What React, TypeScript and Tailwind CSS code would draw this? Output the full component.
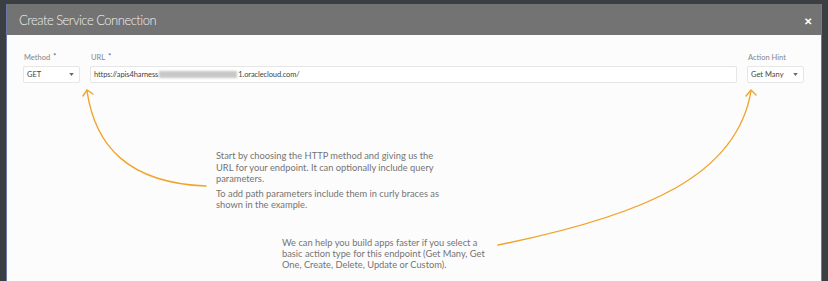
import React from "react";

const Caret = () => (
  <svg width="5" height="3" viewBox="0 0 6 4" className="shrink-0">
    <path d="M0 0 L6 0 L3 4 Z" fill="#666" />
  </svg>
);

const Field: React.FC<{ label: string; required?: boolean; className?: string; children: React.ReactNode }> = ({
  label,
  required,
  className,
  children,
}) => (
  <div className={"flex flex-col " + (className ?? "")}>
    <div className="h-[14px] flex items-start text-[7.5px] leading-[12px] text-[#858585] pl-[1px]">
      {label}
      {required && <span className="ml-[3px] text-[#4a6a9a] text-[8px] leading-[9px]">*</span>}
    </div>
    <div className="h-[17px] bg-white border border-[#e6e6e6] rounded-[2px] flex items-center pl-[3px] pr-[5px] text-[7.5px] text-[#444]">
      {children}
    </div>
  </div>
);

const App: React.FC = () => {
  return (
    <div
      className="w-[828px] h-[281px] overflow-hidden bg-[#3b3f43] pt-[4px] pl-[6px] pr-[6px]"
      style={{ fontFamily: "Lato, 'Liberation Sans', sans-serif" }}
    >
      <div className="w-full h-full flex flex-col border-l border-r border-[#6b78a8]">
        <div className="h-[31px] bg-[#737373] flex items-center justify-between pl-[12px] pr-[9px] shrink-0">
          <h1 className="text-[13px] font-light text-[#f0f0f0] tracking-[-0.5px] pt-[2px]">Create Service Connection</h1>
          <span className="text-white text-[10px] font-bold leading-none pt-[2px]">✕</span>
        </div>

        <div className="relative flex-1 bg-[#fcfcfc]">
          <div className="flex items-start gap-[10px] pl-[16px] pr-[17px] pt-[17px]">
            <Field label="Method" required className="w-[57px]">
              <span className="flex-1">GET</span>
              <Caret />
            </Field>
            <Field label="URL" required className="flex-1">
              <span className="tracking-[-0.1px]">https://apis4harness</span>
              <span className="inline-block w-[78px] h-[7px] bg-[#c8c8c8] blur-[1px] mx-[1px]" />
              <span className="tracking-[-0.1px]">1.oraclecloud.com/</span>
            </Field>
            <Field label="Action Hint" className="w-[57px]">
              <span className="flex-1">Get Many</span>
              <Caret />
            </Field>
          </div>

          <svg className="absolute inset-0 pointer-events-none" width="816" height="246" viewBox="0 0 816 246">
            <g fill="none" stroke="#f2a32a" strokeWidth="1.4" strokeLinecap="round">
              <path d="M199 151 C 120 148, 88 110, 80 56" />
              <path d="M76 61 L80 55 L86 59" />
              <path d="M491 210 C 640 180, 730 140, 744 56" />
              <path d="M739 61 L744 55 L749 60" />
            </g>
          </svg>

          <div className="absolute left-[209px] top-[115px] w-[235px] text-[9.3px] leading-[11.5px] text-[#747474] flex flex-col gap-[3px]">
            <p>Start by choosing the HTTP method and giving us the URL for your endpoint. It can optionally include query parameters.</p>
            <p>To add path parameters include them in curly braces as shown in the example.</p>
          </div>

          <div className="absolute left-[275px] top-[202px] w-[205px] text-[9.3px] leading-[11px] text-[#747474]">
            <p>We can help you build apps faster if you select a basic action type for this endpoint (Get Many, Get One, Create, Delete, Update or Custom).</p>
          </div>
        </div>
      </div>
    </div>
  );
};

export default App;
